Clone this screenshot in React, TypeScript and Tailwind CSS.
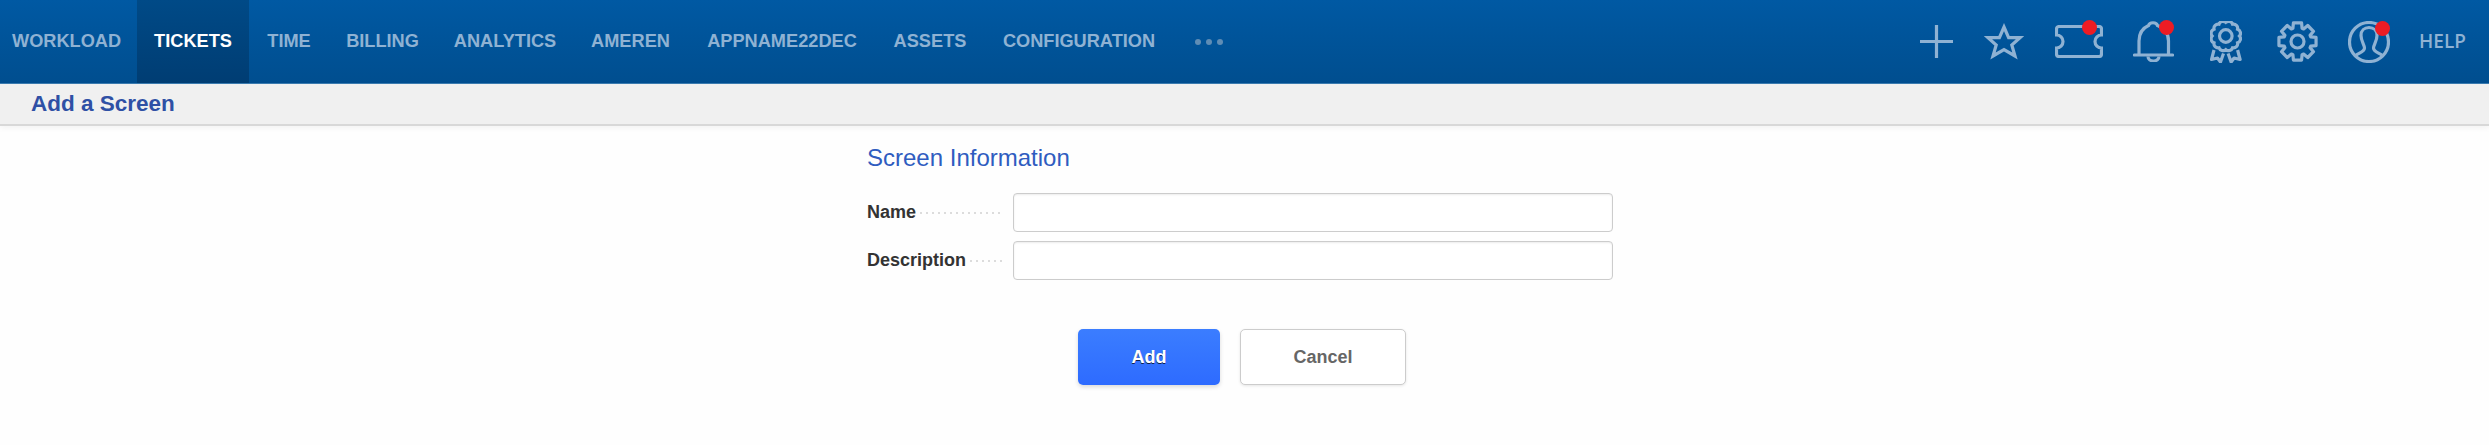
import type { ReactNode } from "react";

const navItems = [
  { label: "WORKLOAD", width: "w-[137px] pl-3" },
  { label: "TICKETS", width: "w-[112px] justify-center" },
  { label: "TIME", width: "w-[80px] justify-center" },
  { label: "BILLING", width: "w-[107px] justify-center" },
  { label: "ANALYTICS", width: "w-[138px] justify-center" },
  { label: "AMEREN", width: "w-[113px] justify-center" },
  { label: "APPNAME22DEC", width: "w-[190px] justify-center" },
  { label: "ASSETS", width: "w-[106px] justify-center" },
  { label: "CONFIGURATION", width: "w-[192px] justify-center" },
];

// scalloped ring of the medal icon
function scallop(cx: number, cy: number, r: number, n: number) {
  let d = "";
  for (let i = 0; i <= n; i++) {
    const a = (i / n) * Math.PI * 2;
    const x = (cx + r * Math.cos(a)).toFixed(2);
    const y = (cy + r * Math.sin(a)).toFixed(2);
    d += i === 0 ? `M${x} ${y}` : ` A4.2 4.2 0 0 1 ${x} ${y}`;
  }
  return d + "Z";
}

// outline of the gear, 8 teeth
function gear(cx: number, cy: number, outer: number, inner: number) {
  const pts: string[] = [];
  const n = 8;
  for (let i = 0; i < n; i++) {
    const a = (i / n) * Math.PI * 2 - Math.PI / 2;
    const t = Math.PI / 8;
    [
      [a - t * 0.55, outer],
      [a + t * 0.55, outer],
      [a + t * 0.85, inner],
      [a + t * 1.15, inner],
    ].forEach(([ang, r]) => {
      pts.push(`${(cx + r * Math.cos(ang)).toFixed(2)},${(cy + r * Math.sin(ang)).toFixed(2)}`);
    });
  }
  return pts.join(" ");
}

function Badge({ className }: { className: string }) {
  return <span className={`absolute h-[15px] w-[15px] rounded-full bg-[#ed1c24] ${className}`} />;
}

function Icon({ w, h, className, children }: { w: number; h: number; className?: string; children: ReactNode }) {
  return (
    <svg
      width={w}
      height={h}
      viewBox={`0 0 ${w} ${h}`}
      fill="none"
      stroke="#8fb2d3"
      strokeWidth="3.2"
      className={`block ${className ?? ""}`}
    >
      {children}
    </svg>
  );
}

function HeaderIcons() {
  return (
    <div className="ml-auto flex items-center pr-[22px]">
      <Icon w={33} h={33}>
        <path d="M0 16.5H33M16.5 0V33" />
      </Icon>
      <Icon w={40} h={37} className="ml-[31px]">
        <path d="M20 4 L24.6 14.6 L36 14.6 L27.8 22 L31 33 L20 26.6 L9 33 L12.2 22 L4 14.6 L15.4 14.6Z" />
      </Icon>
      <div className="relative ml-[31px]">
        <Icon w={48} h={33}>
          <path d="M4 1.5H44a2.5 2.5 0 0 1 2.5 2.5V10a6.5 6.5 0 0 0 0 13V29a2.5 2.5 0 0 1 -2.5 2.5H4a2.5 2.5 0 0 1 -2.5 -2.5V23a6.5 6.5 0 0 0 0 -13V4a2.5 2.5 0 0 1 2.5 -2.5Z" />
        </Icon>
        <Badge className="right-[6px] -top-[5px]" />
      </div>
      <div className="relative ml-[30px]">
        <Icon w={41} h={41}>
          <path d="M6 33V20C6 11 10 7 15.5 4.5C16.5 0.8 23.5 0.8 24.5 4.5C31 7 35.5 11 35.5 20V33" />
          <path d="M1.5 34H39.5" strokeLinecap="round" />
          <path d="M15 35.5a5.5 4.5 0 0 0 11 0" />
        </Icon>
        <Badge className="right-0 -top-px" />
      </div>
      <Icon w={32} h={42} className="ml-9">
        <path d={scallop(15.8, 15, 13.6, 12)} />
        <circle cx="15.8" cy="15" r="6.3" />
        <path d="M4 29L1.5 38.5L7.5 37L10.5 41L13.5 32.5M27.6 29L30.1 38.5L24.1 37L21.1 41L18.1 32.5" strokeLinejoin="round" />
      </Icon>
      <Icon w={41} h={41} className="ml-[35px]">
        <polygon points={gear(20.5, 20.5, 19, 14)} strokeLinejoin="round" />
        <circle cx="20.5" cy="20.5" r="6.5" />
      </Icon>
      <div className="relative ml-[30px]">
        <Icon w={42} h={42}>
          <circle cx="21" cy="21" r="19.5" />
          <path d="M7.5 35C9 32 16.5 31.5 16.5 27C16.5 24 13 20 13 14.5C13 9.5 16.5 6.5 21 6.5C25.5 6.5 29 9.5 29 14.5C29 20 25.5 24 25.5 27C25.5 31.5 33 32 34.5 35" />
        </Icon>
        <Badge className="right-0 top-0" />
      </div>
      <span className="ml-[29px] w-[48px] font-['Open_Sans',sans-serif] text-[19px] leading-none font-semibold text-[#8fb2d3]">HELP</span>
    </div>
  );
}

function Field({ label }: { label: string }) {
  return (
    <div className="flex h-[39px] items-center">
      <div className="flex w-[136px] items-center">
        <span className="text-[18px] font-bold whitespace-nowrap text-[#333333]">{label}</span>
        <span className="ml-1 h-[2px] flex-1 bg-[linear-gradient(to_right,#dcdcdc_2px,transparent_2px)] bg-[length:6px_2px]" />
      </div>
      <input
        type="text"
        className="ml-[10px] h-[39px] w-[600px] rounded-[4px] border border-[#cccccc] bg-white shadow-[inset_0_1px_2px_rgba(0,0,0,0.08)]"
      />
    </div>
  );
}

export default function App() {
  return (
    <div className="min-h-[445px] bg-[#fefefe] font-['Liberation_Sans',Arial,sans-serif]">
      <header className="flex h-[84px] border-b border-[#3b7cb1] bg-gradient-to-b from-[#0059a3] to-[#004e8f]">
        <nav className="flex items-stretch">
          {navItems.map((item) => (
            <a
              key={item.label}
              className={`flex items-center text-[18.2px] font-bold whitespace-nowrap ${item.width} ${
                item.label === "TICKETS" ? "bg-gradient-to-b from-[#004a87] to-[#003d73] text-white" : "text-[#8fb2d3]"
              }`}
            >
              {item.label}
            </a>
          ))}
          <div className="ml-5 flex items-center gap-[5px]">
            <span className="h-[6px] w-[6px] rounded-full bg-[#5f8db5]" />
            <span className="h-[6px] w-[6px] rounded-full bg-[#5f8db5]" />
            <span className="h-[6px] w-[6px] rounded-full bg-[#5f8db5]" />
          </div>
        </nav>
        <HeaderIcons />
      </header>

      <div className="flex h-[42px] items-center border-b-2 border-[#d8d8d8] bg-[#f0f0f0] pl-[31px] shadow-[0_2px_6px_rgba(0,0,0,0.05)]">
        <h1 className="text-[22.5px] font-bold text-[#2f50a5]">Add a Screen</h1>
      </div>

      <main className="mx-auto w-[755px] pr-[9px]">
        <h2 className="mt-[18px] text-[24px] leading-7 text-[#2f5cc0]">Screen Information</h2>
        <div className="mt-[21px] flex flex-col gap-[9px]">
          <Field label="Name" />
          <Field label="Description" />
        </div>
        <div className="mt-[49px] flex gap-5 pl-[211px]">
          <button className="h-[56px] w-[142px] rounded-[5px] bg-gradient-to-b from-[#3b7dff] to-[#2e6bff] text-[18px] font-bold text-white shadow-[0_2px_4px_rgba(0,0,0,0.15)] [text-shadow:0_1px_0_#10204a]">
            Add
          </button>
          <button className="h-[56px] w-[166px] rounded-[5px] border border-[#cccccc] bg-white text-[18px] font-bold text-[#666666] shadow-[0_1px_3px_rgba(0,0,0,0.1)]">
            Cancel
          </button>
        </div>
      </main>
    </div>
  );
}
